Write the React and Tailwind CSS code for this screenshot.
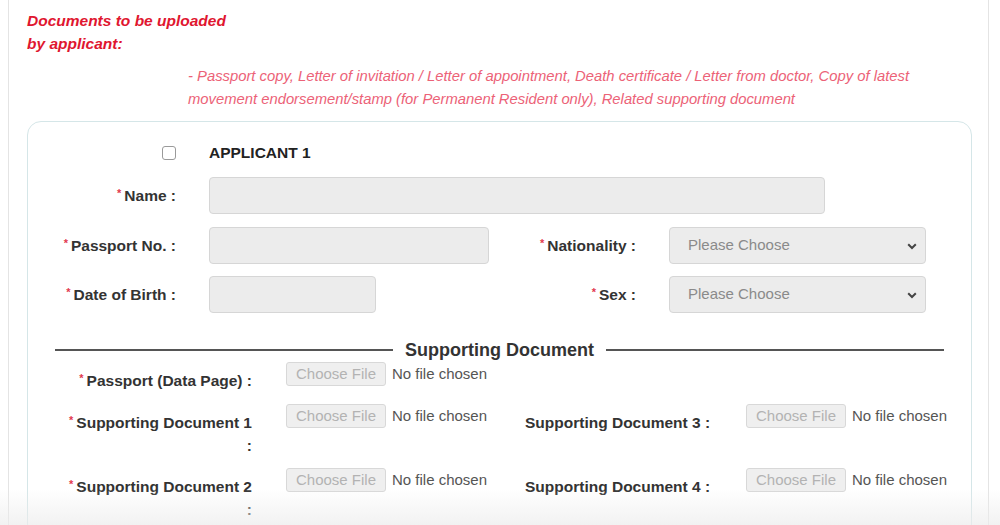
import React from 'react'

const Req = () => (
  <span className="relative -top-[4px] mr-[3px] text-[11px] font-bold text-[#e23a4f]">*</span>
)

const TextBox = ({ width }) => (
  <input
    type="text"
    readOnly
    className={`${width} h-[37px] rounded-[4px] border border-[#d6d6d6] bg-[#ececec] outline-none`}
  />
)

const SelectBox = () => (
  <div className="relative w-[257px] h-[37px] rounded-[4px] border border-[#d6d6d6] bg-[#ececec] flex items-center pl-[18px] text-[15px] font-normal text-[#8a8a8a]">
    Please Choose
    <svg className="absolute right-[8px] top-[15px]" width="10" height="7" viewBox="0 0 10 7">
      <path d="M1.2 1.2 L5 5 L8.8 1.2" fill="none" stroke="#444" strokeWidth="2" />
    </svg>
  </div>
)

const FileInput = () => (
  <div className="flex items-center h-[24px] text-[15px] font-normal">
    <span className="w-[100px] h-[24px] flex items-center justify-center rounded-[3px] border border-[#d8d8d8] bg-[#efefef] text-[#b3b3b3]">
      Choose File
    </span>
    <span className="ml-[6px] text-[#555]">No file chosen</span>
  </div>
)

const App = () => {
  return (
    <div className="relative w-[1000px] h-[525px] overflow-hidden bg-white font-['Liberation_Sans',Arial,sans-serif]">
      <div className="ml-[8px] w-[981px] h-[525px] border-l border-r border-[#e4e4e4] pl-[18px] pt-[9px]">
        <div className="text-[15.5px] leading-[23px] font-bold italic text-[#e0162f]">
          Documents to be uploaded
          <br />
          by applicant:
        </div>

        <p className="mt-[10px] pl-[161px] text-[14.8px] leading-[23px] italic text-[#ec6277]">
          - Passport copy, Letter of invitation / Letter of appointment, Death certificate / Letter from doctor, Copy of latest
          <br />
          movement endorsement/stamp (for Permanent Resident only), Related supporting document
        </p>

        <div className="mt-[10px] w-[945px] h-[420px] rounded-[14px] border border-[#d5e6e8] pt-[20px]">
          <div className="flex items-center h-[22px]">
            <div className="w-[148px] flex justify-end">
              <span className="w-[14px] h-[14px] rounded-[3px] border border-[#9a9a9a] bg-white" />
            </div>
            <span className="ml-[33px] text-[15.5px] font-bold text-[#222]">APPLICANT 1</span>
          </div>

          <div className="mt-[13px] flex items-center text-[15.5px] font-bold text-[#333]">
            <div className="w-[148px] text-right"><Req />Name :</div>
            <div className="ml-[33px]"><TextBox width="w-[616px]" /></div>
          </div>

          <div className="mt-[13px] flex items-center text-[15.5px] font-bold text-[#333]">
            <div className="w-[148px] text-right"><Req />Passport No. :</div>
            <div className="ml-[33px] w-[280px]"><TextBox width="w-[280px]" /></div>
            <div className="w-[147px] text-right"><Req />Nationality :</div>
            <div className="ml-[33px]"><SelectBox /></div>
          </div>

          <div className="mt-[12px] flex items-center text-[15.5px] font-bold text-[#333]">
            <div className="w-[148px] text-right"><Req />Date of Birth :</div>
            <div className="ml-[33px] w-[280px]"><TextBox width="w-[167px]" /></div>
            <div className="w-[147px] text-right"><Req />Sex :</div>
            <div className="ml-[33px]"><SelectBox /></div>
          </div>

          <div className="mt-[25px] mx-[27px] h-[24px] flex items-center gap-[12px]">
            <div className="flex-1 h-[1.5px] bg-[#555]" />
            <span className="text-[18px] font-bold text-[#333]">Supporting Document</span>
            <div className="flex-1 h-[1.5px] bg-[#555]" />
          </div>

          <div className="flex flex-col gap-[11px] text-[15.5px] leading-[22px] font-bold text-[#333]">
            <div className="flex items-start">
              <div className="w-[224px] pt-[8px] text-right"><Req />Passport (Data Page) :</div>
              <div className="ml-[34px]"><FileInput /></div>
            </div>

            <div className="flex items-start">
              <div className="w-[224px] pt-[8px] text-right">
                <Req />Supporting Document 1
                <br />:
              </div>
              <div className="ml-[34px] w-[239px]"><FileInput /></div>
              <div className="w-[187px] pt-[8px]">Supporting Document 3 :</div>
              <div className="ml-[34px]"><FileInput /></div>
            </div>

            <div className="flex items-start">
              <div className="w-[224px] pt-[8px] text-right">
                <Req />Supporting Document 2
                <br />:
              </div>
              <div className="ml-[34px] w-[239px]"><FileInput /></div>
              <div className="w-[187px] pt-[8px]">Supporting Document 4 :</div>
              <div className="ml-[34px]"><FileInput /></div>
            </div>
          </div>
        </div>
      </div>

      <div className="pointer-events-none absolute bottom-0 left-0 right-0 h-[36px] bg-gradient-to-b from-white/0 to-[#ececec]/70" />
    </div>
  )
}

export default App
